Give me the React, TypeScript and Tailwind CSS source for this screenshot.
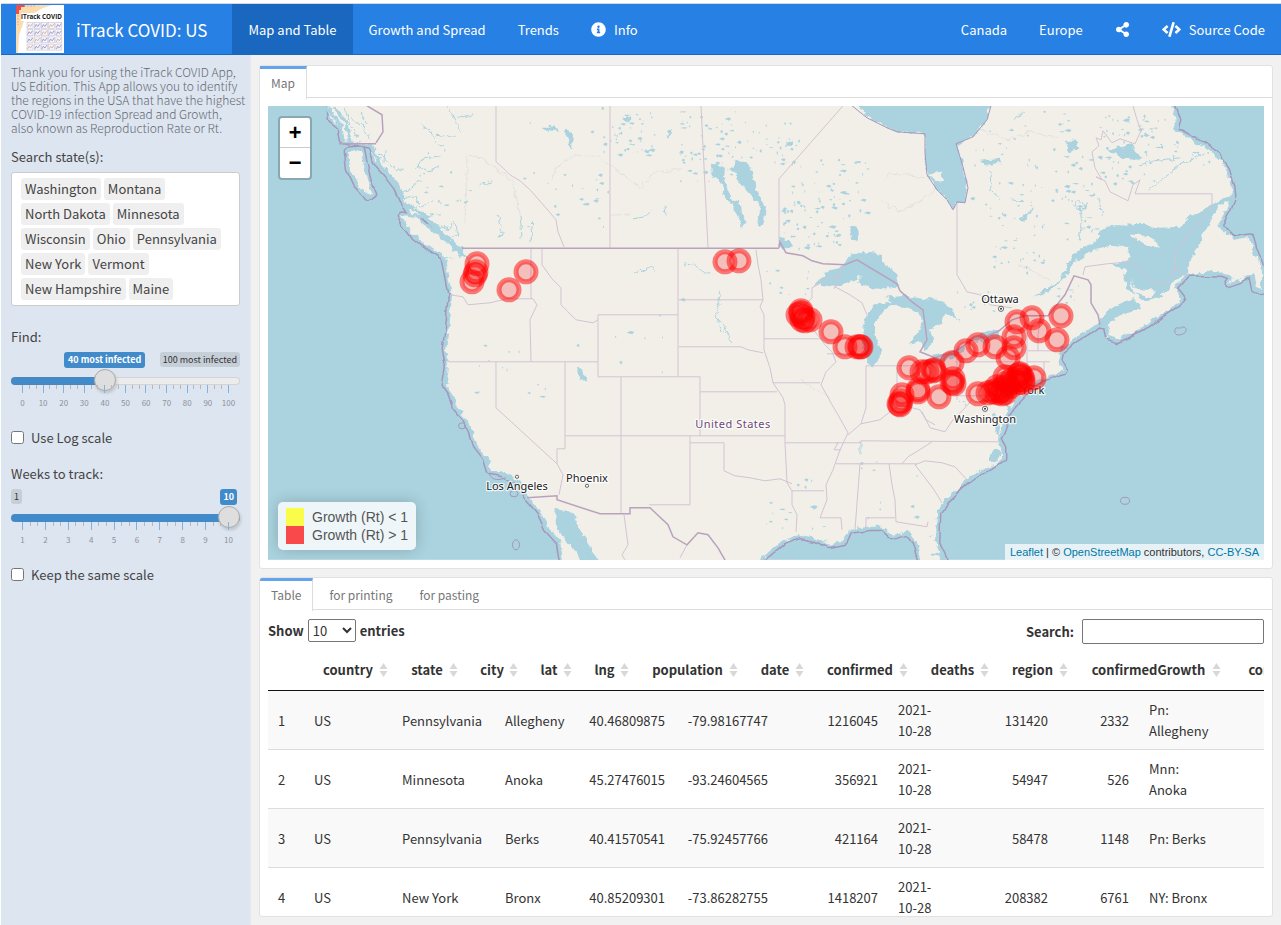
import type { ReactNode } from "react";
import { FaCode, FaInfoCircle, FaShareAlt } from "react-icons/fa";

const states = [
  "Washington", "Montana", "North Dakota", "Minnesota", "Wisconsin", "Ohio",
  "Pennsylvania", "New York", "Vermont", "New Hampshire", "Maine",
];

const columns = [
  "country", "state", "city", "lat", "lng", "population", "date",
  "confirmed", "deaths", "region", "confirmedGrowth", "confirmedRt",
];

const rows = [
  ["1", "US", "Pennsylvania", "Allegheny", "40.46809875", "-79.98167747", "1216045", "2021-10-28", "131420", "2332", "Pn: Allegheny"],
  ["2", "US", "Minnesota", "Anoka", "45.27476015", "-93.24604565", "356921", "2021-10-28", "54947", "526", "Mnn: Anoka"],
  ["3", "US", "Pennsylvania", "Berks", "40.41570541", "-75.92457766", "421164", "2021-10-28", "58478", "1148", "Pn: Berks"],
  ["4", "US", "New York", "Bronx", "40.85209301", "-73.86282755", "1418207", "2021-10-28", "208382", "6761", "NY: Bronx"],
];
const rightAligned = [4, 5, 6, 8, 9];

/* ---------- map data ---------- */

const mainland =
  "M327 96 L330 118 L340 126 L343 140 L357 143 L372 146 L376 162 L388 175 L398 188 L406 205 L412 214 L425 216 L435 226 L449 240 L459 246 L464 252 L468 262 L463 256 L456 259 L445 259 L448 275 L452 295 L450 320 L446 350 L449 365 L448 375 L446 385 L453 395 L457 408 L466 418 L473 432 L477 445 L487 458 L491 471 L503 473 L514 479 L522 485 L528 497 L540 511 L548 528 L560 541 L565 575 L755 575 L762 558 L782 541 L800 535 L815 538 L830 544 L845 541 L850 530 L868 527 L883 527 L893 536 L907 531 L916 542 L921 560 L925 575 L948 575 L943 560 L936 545 L937 513 L944 501 L967 480 L980 470 L990 467 L1002 459 L1002 448 L997 439 L1001 430 L1007 413 L1017 400 L1027 390 L1035 381 L1050 376 L1060 372 L1064 371 L1058 360 L1060 351 L1073 340 L1087 331 L1098 323 L1106 325 L1108 336 L1117 339 L1140 329 L1157 317 L1177 304 L1182 298 L1174 288 L1187 273 L1207 272 L1223 273 L1233 277 L1228 284 L1240 280 L1253 273 L1256 288 L1262 290 L1262 273 L1259 261 L1253 250 L1250 237 L1233 240 L1223 230 L1217 227 L1227 210 L1232 197 L1231 187 L1226 170 L1217 157 L1203 147 L1187 137 L1174 130 L1177 120 L1167 96 Z";

const waters = [
  // Gulf of St. Lawrence with Belle Isle strait
  "M1239 198 L1228 196 L1212 205 L1193 215 L1180 227 L1160 228 L1140 225 L1107 227 L1100 232 L1097 242 L1083 247 L1073 257 L1067 267 L1060 281 L1046 289 L1033 297 L1048 292 L1062 281 L1073 264 L1090 252 L1110 245 L1127 247 L1131 256 L1127 261 L1110 265 L1127 270 L1124 279 L1127 289 L1137 297 L1145 302 L1160 297 L1168 288 L1174 282 L1187 274 L1188 264 L1197 250 L1203 237 L1213 217 L1219 204 L1232 202 Z",
  // Bay of Fundy
  "M1098 325 L1101 317 L1113 308 L1134 299 L1142 308 L1125 313 L1112 322 L1107 330 Z",
  // Hudson and James Bay
  "M852 96 L867 117 L887 127 L897 132 L925 134 L925 153 L927 175 L937 190 L947 200 L953 210 L957 202 L965 203 L968 188 L963 167 L957 145 L973 137 L987 120 L992 96 Z",
  // Lake Superior
  "M812 288 L830 270 L845 265 L850 256 L863 252 L880 255 L886 267 L897 273 L899 285 L890 289 L867 287 L857 283 L863 276 L847 284 L833 287 L820 285 Z",
  // Lake Michigan
  "M898 302 L878 303 L867 313 L863 330 L863 347 L867 363 L872 367 L879 360 L881 350 L875 337 L875 323 L883 311 Z",
  // Lake Huron and Georgian Bay
  "M885 298 L905 296 L922 299 L938 300 L948 306 L959 320 L944 314 L941 323 L930 330 L933 343 L925 351 L921 342 L909 344 L917 334 L923 322 L918 312 L900 307 Z",
  // Lake Erie
  "M925 363 L931 356 L945 354 L960 347 L970 343 L962 353 L943 362 Z",
  // Lake Ontario
  "M968 341 L978 334 L998 331 L999 337 L985 343 Z",
  // Lake Winnipeg
  "M733 170 L736 160 L747 162 L753 177 L758 195 L766 208 L763 224 L758 225 L760 208 L752 197 L743 187 L737 176 Z",
  // Lakes Winnipegosis and Manitoba
  "M712 165 L725 168 L724 178 L728 190 L731 199 L741 204 L742 214 L747 224 L742 228 L737 214 L732 204 L724 198 L722 184 L713 177 Z",
  "M850 227 L857 226 L860 234 L857 241 L851 240 Z",
  "M577 367 L583 370 L588 379 L582 382 L578 375 Z",
  "M780 238 L788 241 L792 246 L784 249 L779 246 Z",
  // Gulf of California
  "M555 508 L566 511 L574 514 L580 530 L592 550 L608 575 L590 575 L578 556 L566 540 L556 526 Z",
  // Chesapeake and Delaware
  "M993 413 L997 414 L1000 428 L998 438 L995 428 Z",
  "M1006 403 L1011 405 L1010 411 L1007 410 Z",
  // Pamlico
  "M990 455 L996 450 L1001 452 L998 460 L990 463 Z",
  "M565 130 L573 133 L572 150 L569 145 Z",
  "M542 128 L556 128 L558 131 L544 131 Z",
  "M1107 150 L1118 149 L1128 144 L1138 154 L1140 160 L1122 159 Z",
  "M980 160 L1000 158 L1002 163 L985 165 Z",
  "M1065 142 L1078 142 L1079 149 L1068 153 Z",
  "M1020 220 L1034 207 L1029 215 L1021 222 Z",
  "M665 132 L672 131 L669 138 Z",
  "M622 118 L631 116 L628 123 Z",
  "M786 143 L794 141 L791 146 L785 146 Z",
];

const islands = [
  "M928 174 L941 172 L943 181 L936 182 Z",
  "M1128 233 L1140 235 L1154 240 L1160 247 L1147 245 L1136 240 Z",
  "M1131 281 L1137 289 L1155 291 L1152 298 L1135 294 Z",
];

const offshore = [
  "M348 152 L361 151 L364 166 L367 180 L373 194 L369 197 L357 183 L350 168 Z",
  "M401 215 L414 217 L424 226 L438 235 L449 246 L459 254 L459 260 L446 258 L428 246 L414 235 L406 224 Z",
];

const borders = [
  "M496 106V162L503 168L510 175L520 181L530 190L545 207L556 220L558 232L564 247",
  "M610 106V248", "M701 106L708 248", "M843 106L779 179V242",
  "M957 202V275L967 292L980 295L990 305L1012 308",
  "M1133 106L1137 120L1141 131L1135 144L1120 139L1112 143L1103 131L1101 140L1096 138L1099 146L1092 152L1095 168L1102 180L1096 177L1105 181L1110 192L1128 201L1133 185L1140 180L1135 194H1212V206L1175 252V270L1187 275",
  "M1175 270L1163 285L1150 283L1139 268L1131 262L1107 264L1085 267L1083 275",
  "M450 295L463 297L468 305L490 303L507 299H533L537 305L530 320L531 362", "M531 248V299",
  "M542 248V265L552 279L561 288L561 305L568 312L576 320L593 323L598 320",
  "M598 315H678", "M598 315V377", "M678 248V377", "M678 300H763", "M678 347H741L748 350L763 353",
  "M449 362H598", "M496 362V408L557 464", "M565 362V449L557 449L557 464L563 475L559 495",
  "M565 436H785", "M598 377H700V436", "M621 377V513", "M700 392H777",
  "M690 436V505H649", "M690 443H724V471L735 476L750 478L765 481L780 479L792 484",
  "M756 250L758 265L761 280L763 300L760 307L764 315V350L770 368L773 383L783 398L785 405V443L787 483L792 491V505L797 515L796 532",
  "M764 339H822", "M773 383H820", "M785 443H838L834 450H841", "M792 491H824",
  "M812 288V298L800 310L798 322L812 328L825 345L832 352L836 362L826 372L821 385L832 405L838 415L848 433L840 450L833 470L826 485L827 500L820 518H841L842 530",
  "M827 354H864", "M866 366V408L861 424", "M848 435L861 424L880 420L890 412L900 405L920 410L926 420L935 425",
  "M836 443L861 443V441L998 442", "M836 464H917", "M860 464L855 530", "M889 464L892 485L895 500L896 522L927 527L928 522",
  "M866 529V518H895", "M915 465L925 478L934 490L942 503", "M915 465L925 461L942 463L955 467L967 480",
  "M902 464L908 457L918 451L932 442", "M922 412L930 428L945 432L953 420L965 408L972 400",
  "M957 396H1005V402", "M955 362H1022", "M957 358V400", "M866 366H925", "M897 367V407",
  "M1027 320V372L1022 385", "M1027 362H1050", "M1028 351H1060", "M1041 316L1038 335V351", "M1044 362V376",
  "M624 515L626 530L628 545L622 555L625 560", "M687 545L680 558", "M835 287L850 295L862 303L867 315",
  "M812 288L830 278H838", "M843 265L834 289",
];

const nationalBorders = [
  "M462 248.500H779",
  "M779 248L780 242L786 253L803 256L812 261L823 264L845 265L857 260L897 284L900 291L912 302L923 310L927 340L920 352L935 358L958 350L970 341L985 337L999 331L1012 320L1025 316H1048L1065 295L1074 276L1088 280L1091 285V303L1098 315L1100 325",
  "M527 498L557 496V500L600 514H630V508H650L668 525L673 537L687 545L698 533L708 535L718 548L726 562",
  "M339 144H376", "M376 143L383 132L382 115L367 106",
];

const rivers = [
  "M330 110L340 122L336 135", "M345 108L350 125L358 138", "M352 120L365 128L370 138", "M360 112L366 124",
  "M378 152L390 165L396 172L404 168", "M385 150L384 163", "M398 190L408 192L412 186L422 182", "M402 198L416 196L418 204",
  "M404 205L420 208L432 200", "M425 216L440 214", "M435 226L450 229L455 222", "M449 240L458 236L456 224",
  "M445 106L452 115L459 128L461 133", "M452 115L463 118L472 115", "M421 124L430 132L436 142L446 147", "M436 135L447 138L456 136",
  "M414 168L424 158L441 156", "M416 166L428 172L440 166", "M478 186L492 182", "M484 186L490 180",
  "M500 238L502 225L496 215", "M531 222L533 235L530 242", "M520 215L522 238", "M634 275L645 270L652 266L653 272",
  "M684 264L698 266L703 273L712 273", "M718 290L720 302L716 318L721 330L732 337", "M716 320L724 325L733 343",
  "M633 219L645 217L650 210", "M665 206L666 215", "M1080 206L1082 225L1079 240", "M1099 198L1102 216", "M1013 120L1024 112",
  "M990 170L991 190L1000 200", "M1012 200L1024 202", "M1140 165L1160 160L1180 158", "M1150 190L1180 165L1204 153",
  "M960 400L966 406", "M860 440V456",
];

const roads = [
  "M465 225L466 200L468 155L480 158L500 172L512 182L520 215", "M600 160L612 167L640 188L655 173L680 170",
  "M552 180L556 168L575 155L600 157", "M885 180L890 174L925 178", "M880 200L898 211L915 205L935 190",
  "M976 129L1010 140L1030 132L1060 138", "M800 380L830 398", "M610 216L630 214", "M1020 265L1050 281",
];

const markers: [number, number][] = [
  [477, 264], [476, 272], [475, 275], [472, 282], [526, 272], [509, 290], [725, 262], [739, 261],
  [801, 311], [798, 315], [801, 313], [803, 317], [802, 320], [805, 321], [810, 320], [831, 332],
  [845, 347], [857, 347], [860, 347], [861, 347], [909, 368], [922, 372], [927, 372], [933, 371], [934, 370],
  [952, 363], [953, 379], [952, 383], [954, 384], [939, 397], [918, 392], [918, 390], [902, 395],
  [901, 401], [899, 404], [900, 405], [966, 351], [978, 345], [995, 347], [1008, 358], [1014, 348],
  [1014, 337], [1017, 322], [1032, 318], [1039, 331], [1057, 340], [1061, 316], [978, 394], [988, 393],
  [993, 392], [997, 387], [998, 393], [1002, 394], [1005, 393], [1005, 377], [1007, 383], [1003, 388],
  [1010, 387], [1012, 380], [1017, 380], [1019, 375], [1022, 377], [1023, 380], [1023, 383], [1018, 383],
  [1034, 378], [1020, 374], [1000, 391],
];

const labels: { text: string; x: number; y: number; dot?: [number, number] }[] = [
  { text: "Ottawa", x: 1000, y: 303, dot: [1001, 309] },
  { text: "Washington", x: 985, y: 423, dot: [985, 409] },
  { text: "New York", x: 1020, y: 394 },
  { text: "Phoenix", x: 587, y: 482, dot: [587, 486] },
  { text: "Los Angeles", x: 517, y: 490, dot: [517, 477] },
];

// Small lakes: x, y, width, height of an area and the number of lakes in it.
const lakeAreas = [
  [604, 108, 52, 48, 42], [680, 112, 60, 70, 70], [740, 120, 60, 45, 30], [790, 160, 80, 60, 46], [782, 200, 60, 50, 50],
  [972, 112, 100, 90, 40], [985, 200, 60, 75, 40], [1062, 150, 36, 90, 36], [1100, 115, 60, 70, 70], [1160, 118, 60, 48, 36],
  [520, 108, 90, 120, 26], [420, 150, 60, 90, 18], [470, 340, 120, 70, 14], [600, 300, 90, 90, 8],
  [765, 480, 60, 50, 16], [765, 265, 45, 35, 10], [1050, 285, 30, 25, 10], [955, 290, 40, 22, 12], [860, 460, 60, 60, 10],
  [930, 530, 8, 26, 6],
];

function lakePath() {
  let seed = 7;
  const next = () => (seed = (seed * 16807) % 2147483647) / 2147483647;
  let d = "";
  for (const [x, y, w, h, n] of lakeAreas) {
    for (let i = 0; i < n; i++) {
      const cx = x + next() * w;
      const cy = y + next() * h;
      const a = 0.5 + next() * next() * 4;
      const b = 0.5 + next() * 1.4;
      d += `M${cx - a} ${cy}L${cx} ${cy - b}L${cx + a} ${cy - b / 2}L${cx + a / 2} ${cy + b}Z`;
    }
  }
  return d;
}
const smallLakes = lakePath();

function MapDrawing() {
  return (
    <svg
      className="block h-full w-full"
      viewBox="268 106 996 454"
      preserveAspectRatio="xMidYMid slice"
      role="img"
      aria-label="Map of growth by county"
    >
      <defs>
        <filter id="rough" filterUnits="userSpaceOnUse" x="250" y="90" width="1030" height="490">
          <feTurbulence type="fractalNoise" baseFrequency="0.14" numOctaves="3" seed="4" />
          <feDisplacementMap in="SourceGraphic" scale="7" xChannelSelector="R" yChannelSelector="G" />
        </filter>
        <filter id="wavy" filterUnits="userSpaceOnUse" x="250" y="90" width="1030" height="490">
          <feTurbulence type="fractalNoise" baseFrequency="0.05" numOctaves="2" seed="9" />
          <feDisplacementMap in="SourceGraphic" scale="6" xChannelSelector="R" yChannelSelector="G" />
        </filter>
      </defs>
      <rect x="268" y="106" width="996" height="454" fill="#aad3df" />
      <g strokeLinejoin="round" filter="url(#wavy)">
        <path d={mainland} fill="#a597bb" stroke="#a597bb" strokeWidth="9" />
        {offshore.map((d) => <path key={d} d={d} fill="#a597bb" stroke="#a597bb" strokeWidth="9" />)}
        <path d={mainland} fill="#aad3df" stroke="#aad3df" strokeWidth="6" />
        {offshore.map((d) => <path key={d} d={d} fill="#aad3df" stroke="#aad3df" strokeWidth="6" />)}
      </g>
      <g filter="url(#rough)">
        <path d={mainland} fill="#f2efe9" />
        <g fill="#f2efe9">{offshore.map((d) => <path key={d} d={d} />)}</g>
        <g fill="#aad3df">{waters.map((d) => <path key={d} d={d} />)}</g>
        <g fill="#f2efe9">{islands.map((d) => <path key={d} d={d} />)}</g>
        <g fill="none" stroke="#aad3df" strokeWidth="1">{rivers.map((d) => <path key={d} d={d} />)}</g>
        <path
          d="M325 106L340 124L343 141M334 108L346 122L350 142M404 204L425 216L449 240L464 252M374 148L380 165L398 186L406 208"
          fill="none" stroke="#aad3df" strokeWidth="3"
        />
        <circle cx="1080.500" cy="206" r="5" fill="none" stroke="#aad3df" strokeWidth="1" />
        <g fill="none" stroke="#e3e1df" strokeWidth="1">{roads.map((d) => <path key={d} d={d} />)}</g>
      </g>
      <path d={smallLakes} fill="#aad3df" />
      <g fill="none" stroke="#d3c3d3" strokeWidth="1">{borders.map((d) => <path key={d} d={d} />)}</g>
      <g fill="none" stroke="#b8a2bd" strokeWidth="1.500">{nationalBorders.map((d) => <path key={d} d={d} />)}</g>
      <g fill="none" stroke="#a597bb" strokeWidth="1">
        <path d="M852 106L867 118L887 128L897 132L925 134L925 153L927 175L937 190L947 200L953 210L957 202L965 203L968 188L963 167L956 144L973 137L987 120L991 106" />
        <ellipse cx="516" cy="545" rx="3.500" ry="5" />
        <ellipse cx="514" cy="494" rx="4" ry="3" />
        <ellipse cx="462" cy="426" rx="3.500" ry="3" />
        <path d="M1175 330C1176 326 1180 330 1183 327C1188 328 1187 334 1180 335C1177 336 1174 334 1175 330Z" />
        <ellipse cx="1125" cy="501" rx="4.500" ry="3.500" />
        <path d="M489 474C493 482 500 480 506 478" />
      </g>
      <g fontFamily='"Noto Sans", sans-serif' fontSize="11" textAnchor="middle" stroke="#ffffff" strokeOpacity="0.8" strokeWidth="2.500" strokeLinejoin="round" paintOrder="stroke">
        {labels.map((l) => (
          <text key={l.text} x={l.x} y={l.y} fill="#222222">{l.text}</text>
        ))}
        <text x="733" y="428" fill="#6d4a75" letterSpacing="0.500">United States</text>
      </g>
      <g fill="#ffffff" stroke="#444444" strokeWidth="0.800">
        {labels.map((l) => l.dot && <circle key={l.text} cx={l.dot[0]} cy={l.dot[1]} r={l.text === "Ottawa" || l.text === "Washington" ? 2.6 : 1.6} />)}
      </g>
      <circle cx="1001" cy="309" r="1" fill="#333333" />
      <circle cx="985" cy="409" r="1" fill="#333333" />
      {markers.map(([x, y], i) => (
        <circle key={i} cx={x} cy={y} r="10" fill="#ff0000" fillOpacity="0.2" stroke="#ff0000" strokeOpacity="0.5" strokeWidth="5" />
      ))}
    </svg>
  );
}

/* ---------- page parts ---------- */

function Logo() {
  return (
    <svg viewBox="0 0 48 48" className="size-12 shrink-0" aria-hidden="true">
      <rect width="48" height="48" fill="#ffffff" />
      <path d="M0 0H36L27 3L18 8L8 16L3 30L2 48H0Z" fill="#fbdcae" />
      <path d="M0 0H9V2H5V5H3V9H0Z" fill="#e8504a" />
      <path d="M8 1H20M2 10V20" stroke="#f3a58a" strokeWidth="1" strokeDasharray="2 1" />
      <rect x="5" y="8" width="41" height="8" fill="#ffffff" />
      <text x="25.500" y="14" textAnchor="middle" fontFamily='"Open Sans", sans-serif' fontWeight="700" fontSize="6.300" fill="#222222">iTrack COVID</text>
      {[0, 1, 2, 3].map((r) =>
        [0, 1, 2, 3, 4].map((c) => (
          <g key={`${r}-${c}`} transform={`translate(${11 + c * 7.2} ${17.5 + r * 7.2})`}>
            <rect width="6" height="6" fill="#f7f5fa" stroke="#c4c4d4" strokeWidth="0.600" />
            <path d="M0.500 5L2 2L3.500 4L5.500 1" fill="none" stroke={(r + c) % 3 ? "#a99bd0" : "#ddb6a8"} strokeWidth="1" />
          </g>
        )),
      )}
    </svg>
  );
}

function NavLink({ children, active }: { children: ReactNode; active?: boolean }) {
  return (
    <a
      href="#"
      aria-current={active ? "page" : undefined}
      className={`flex items-center gap-2 px-4 text-[13px] whitespace-nowrap text-white ${active ? "bg-[#1967be]" : ""}`}
    >
      {children}
    </a>
  );
}

function Tab({ children, active }: { children: ReactNode; active?: boolean }) {
  return (
    <button
      type="button"
      role="tab"
      aria-selected={!!active}
      className={`px-[11px] text-[12px] text-[#777777] ${
        active
          ? "-mb-px h-[33px] border-t-[3px] border-r border-t-[#64a4ec] border-r-[#dddddd] bg-white pb-[3px]"
          : "ml-[5px] h-8 pt-px"
      }`}
    >
      {children}
    </button>
  );
}

function Scale({ id, label, min, max, value, step, left, right, full }: {
  id: string; label: string; min: number; max: number; value: number; step: number;
  left: ReactNode; right: ReactNode; full?: boolean;
}) {
  const count = (max - min) / step;
  return (
    <div className="flex flex-col">
      <label htmlFor={id} className="h-5 text-[13px] leading-5">{label}</label>
      <div className="mt-[5px] flex h-4 items-start text-[9px] leading-4">
        {left}
        <span className="flex-1" />
        {right}
      </div>
      <input
        id={id}
        type="range"
        min={min}
        max={max}
        defaultValue={value}
        className={`mt-px h-6 w-full appearance-none bg-transparent [&::-webkit-slider-runnable-track]:h-2 [&::-webkit-slider-runnable-track]:rounded-full [&::-webkit-slider-thumb]:-mt-[8px] [&::-webkit-slider-thumb]:size-[22px] [&::-webkit-slider-thumb]:appearance-none [&::-webkit-slider-thumb]:rounded-full [&::-webkit-slider-thumb]:border [&::-webkit-slider-thumb]:border-[#ababab] [&::-webkit-slider-thumb]:bg-[#dedede] [&::-webkit-slider-thumb]:shadow-[1px_1px_3px_rgba(255,255,255,0.3),1px_2px_3px_rgba(0,0,0,0.2)] ${
          full
            ? "[&::-webkit-slider-runnable-track]:bg-[#428bca]"
            : "[&::-webkit-slider-runnable-track]:bg-[linear-gradient(to_right,#428bca_41%,#ececec_41%)] [&::-webkit-slider-runnable-track]:shadow-[inset_0_0_0_1px_rgba(120,120,120,0.2)]"
        }`}
      />
      <div className="-mt-2 flex h-2 justify-between px-[11px]" aria-hidden="true">
        {Array.from({ length: count * 3 + 1 }, (_, i) => (
          <span key={i} className={i % 3 ? "h-1 w-px bg-[#b3b8c0]" : "h-2 w-px bg-[#7fb2dd]"} />
        ))}
      </div>
      <div className="mt-[2px] flex justify-between px-[11px] text-[8px] leading-4 text-[#8b929c]" aria-hidden="true">
        {Array.from({ length: count + 1 }, (_, i) => (
          <span key={i} className="flex w-px justify-center">{min + i * step}</span>
        ))}
      </div>
    </div>
  );
}

function Check({ id, label }: { id: string; label: string }) {
  return (
    <div className="flex h-5 items-center gap-[7px] text-[13px]">
      <input id={id} type="checkbox" className="size-[13px]" />
      <label htmlFor={id}>{label}</label>
    </div>
  );
}

export default function App() {
  return (
    <div className='flex h-screen flex-col bg-white pl-px font-["Noto_Sans_CJK_SC",sans-serif] text-[13px] leading-[21px] text-[#333333]'>
      <header className="mt-[3px] flex h-[52px] shrink-0 border-t border-b border-t-[#d5d9de] border-b-[#1967be] bg-[#2780e3]">
        <a href="#" className="mr-[25px] flex items-center gap-3 pl-[15px] text-[17px] whitespace-nowrap text-white">
          <Logo />
          iTrack COVID: US
        </a>
        <nav className="flex flex-1">
          <NavLink active>Map and Table</NavLink>
          <NavLink>Growth and Spread</NavLink>
          <NavLink>Trends</NavLink>
          <NavLink><FaInfoCircle className="size-[15px]" />Info</NavLink>
          <span className="flex-1" />
          <NavLink>Canada</NavLink>
          <NavLink>Europe</NavLink>
          <NavLink><FaShareAlt className="size-[15px]" aria-label="Share" /></NavLink>
          <NavLink><FaCode className="size-[19px]" />Source Code</NavLink>
        </nav>
      </header>

      <div className="flex min-h-0 flex-1">
        <aside className="flex w-[250px] shrink-0 flex-col border-r border-[#e4e8ee] bg-[#dde5f0] px-[10px] pt-[10px] text-[#444444]">
          <p className="text-[12px] leading-[14px] font-light whitespace-nowrap text-[#666a70]">
            Thank you for using the iTrack COVID App,<br />
            US Edition. This App allows you to identify<br />
            the regions in the USA that have the highest<br />
            COVID-19 infection Spread and Growth,<br />
            also known as Reproduction Rate or Rt.
          </p>
          <span id="states" className="mt-3 mb-[5px] h-5 leading-5">Search state(s):</span>
          <ul aria-labelledby="states" className="flex flex-wrap gap-[3px] rounded-[3px] border border-[#cccccc] bg-white py-[5px] pr-2 pl-[9px]">
            {states.map((s) => (
              <li key={s} className="h-[22px] rounded-[3px] bg-[#efefef] px-1 leading-[21px]">{s}</li>
            ))}
          </ul>
          <div className="mt-[21px]">
            <Scale
              id="find" label="Find:" min={0} max={100} step={10} value={40}
              left={<span className="ml-[53px] rounded-[3px] bg-[#428bca] px-1 font-bold whitespace-nowrap text-white">40 most infected</span>}
              right={<span className="rounded-[3px] bg-[#c6ced8] px-[3px] leading-[15px] whitespace-nowrap text-[#333333]">100 most infected</span>}
            />
          </div>
          <div className="mt-4"><Check id="log" label="Use Log scale" /></div>
          <div className="mt-[17px]">
            <Scale
              id="weeks" label="Weeks to track:" min={1} max={10} step={1} value={10} full
              left={<span className="rounded-[3px] bg-[#c6ced8] px-[3px] leading-[15px] text-[#333333]">1</span>}
              right={<span className="mr-[3px] rounded-[3px] bg-[#428bca] px-[3px] font-bold text-white">10</span>}
            />
          </div>
          <div className="mt-4"><Check id="same" label="Keep the same scale" /></div>
        </aside>

        <main className="flex min-w-0 flex-1 flex-col gap-2 bg-[#f1f1f1] pt-[10px] pr-2 pb-2 pl-2">
          <section className="flex min-h-0 flex-[504] basis-0 flex-col rounded-[3px] border border-[#e2e2e2] bg-white">
            <div role="tablist" className="flex h-8 shrink-0 border-b border-[#dddddd]">
              <Tab active>Map</Tab>
            </div>
            <div className="relative m-2 min-h-0 flex-1 overflow-hidden">
              <MapDrawing />
              <div className="absolute top-[10px] left-[10px] flex flex-col overflow-hidden rounded-[4px] border-2 border-black/20 bg-white bg-clip-padding font-['Liberation_Mono',monospace] text-[22px] font-bold text-black">
                <button type="button" aria-label="Zoom in" className="h-[30px] w-[30px] border-b border-[#cccccc] pt-[3px]">+</button>
                <button type="button" aria-label="Zoom out" className="h-[30px] w-[30px] pt-[3px]">−</button>
              </div>
              <div className='absolute bottom-[10px] left-[10px] flex flex-col rounded-[5px] bg-white/80 px-2 py-[6px] font-["Liberation_Sans",sans-serif] text-[14px] leading-[18px] text-[#555555] shadow-[0_0_15px_rgba(0,0,0,0.2)]'>
                <div className="flex gap-2"><i className="size-[18px] bg-[#ffff00] opacity-70" />Growth (Rt) &lt; 1</div>
                <div className="flex gap-2"><i className="size-[18px] bg-[#ff0000] opacity-70" />Growth (Rt) &gt; 1</div>
              </div>
              <div className='absolute right-0 bottom-0 h-4 bg-white/70 px-[5px] font-["Liberation_Sans",sans-serif] text-[11px] leading-4 text-[#333333]'>
                <a href="#" className="text-[#0078a8]">Leaflet</a> | © <a href="#" className="text-[#0078a8]">OpenStreetMap</a> contributors, <a href="#" className="text-[#0078a8]">CC-BY-SA</a>
              </div>
            </div>
          </section>

          <section className="flex min-h-0 flex-[340] basis-0 flex-col overflow-hidden rounded-[3px] border border-[#e2e2e2] bg-white">
            <div role="tablist" className="flex h-8 shrink-0 border-b border-[#dddddd]">
              <Tab active>Table</Tab>
              <Tab>for printing</Tab>
              <Tab>for pasting</Tab>
            </div>
            <div className="min-h-0 flex-1 overflow-hidden px-2 pt-[9px]">
              <div className="flex items-start justify-between font-bold">
                <div className="flex h-6 items-center gap-1">
                  <label htmlFor="length">Show</label>
                  <select id="length" className="h-[23px] w-12 rounded-[2px] border border-[#767676] bg-white font-normal">
                    <option>10</option>
                    <option>25</option>
                  </select>
                  <span>entries</span>
                </div>
                <div className="flex items-center gap-2">
                  <label htmlFor="search">Search:</label>
                  <input id="search" type="search" className="h-[25px] w-[182px] rounded-[2px] border border-[#767676] bg-white px-1" />
                </div>
              </div>
              <div className="overflow-hidden">
                <table className="w-[1084px] table-fixed border-collapse border-b border-[#111111]">
                  <colgroup>
                    <col className="w-[36px]" /><col className="w-[88px]" /><col className="w-[70px]" />
                    <col className="w-[60px]" /><col className="w-[54px]" /><col className="w-[57px]" />
                    <col className="w-[109px]" /><col className="w-[66px]" /><col className="w-[104px]" />
                    <col className="w-[81px]" /><col className="w-[79px]" /><col className="w-[153px]" />
                    <col />
                  </colgroup>
                  <thead>
                    <tr>
                      <th className="h-[47px]" aria-label="row" />
                      {columns.map((c) => (
                        <th key={c} className="relative pt-[6px] text-center font-bold whitespace-nowrap">
                          {c}
                          <svg className="absolute top-[19px] right-1 h-[14px] w-[9px]" viewBox="0 0 9 14" fill="#d8d8d8" aria-hidden="true">
                            <path d="M4.500 0L8.500 6H0.500Z" />
                            <path d="M4.500 14L0.500 8H8.500Z" />
                          </svg>
                        </th>
                      ))}
                    </tr>
                  </thead>
                </table>
                <table className="-mt-px w-[1100px] table-fixed border-collapse">
                  <colgroup>
                    <col className="w-[36px]" /><col className="w-[88px]" /><col className="w-[103px]" />
                    <col className="w-[82px]" /><col className="w-[98px]" /><col className="w-[103px]" />
                    <col className="w-[110px]" /><col className="w-[58px]" /><col className="w-[112px]" />
                    <col className="w-[81px]" /><col className="w-[84px]" /><col />
                  </colgroup>
                  <tbody>
                    {rows.map((r, i) => (
                      <tr key={r[0]} className={`h-[59px] border-b border-[#dddddd] ${i === 0 ? "border-t border-t-[#111111]" : ""} ${i % 2 ? "bg-white" : "bg-[#f9f9f9]"}`}>
                        {r.map((v, j) => (
                          <td key={j} className={`px-[10px] py-2 ${rightAligned.includes(j) ? "text-right" : "text-left"}`}>{v}</td>
                        ))}
                        <td />
                      </tr>
                    ))}
                  </tbody>
                </table>
              </div>
            </div>
          </section>
        </main>
      </div>
    </div>
  );
}
